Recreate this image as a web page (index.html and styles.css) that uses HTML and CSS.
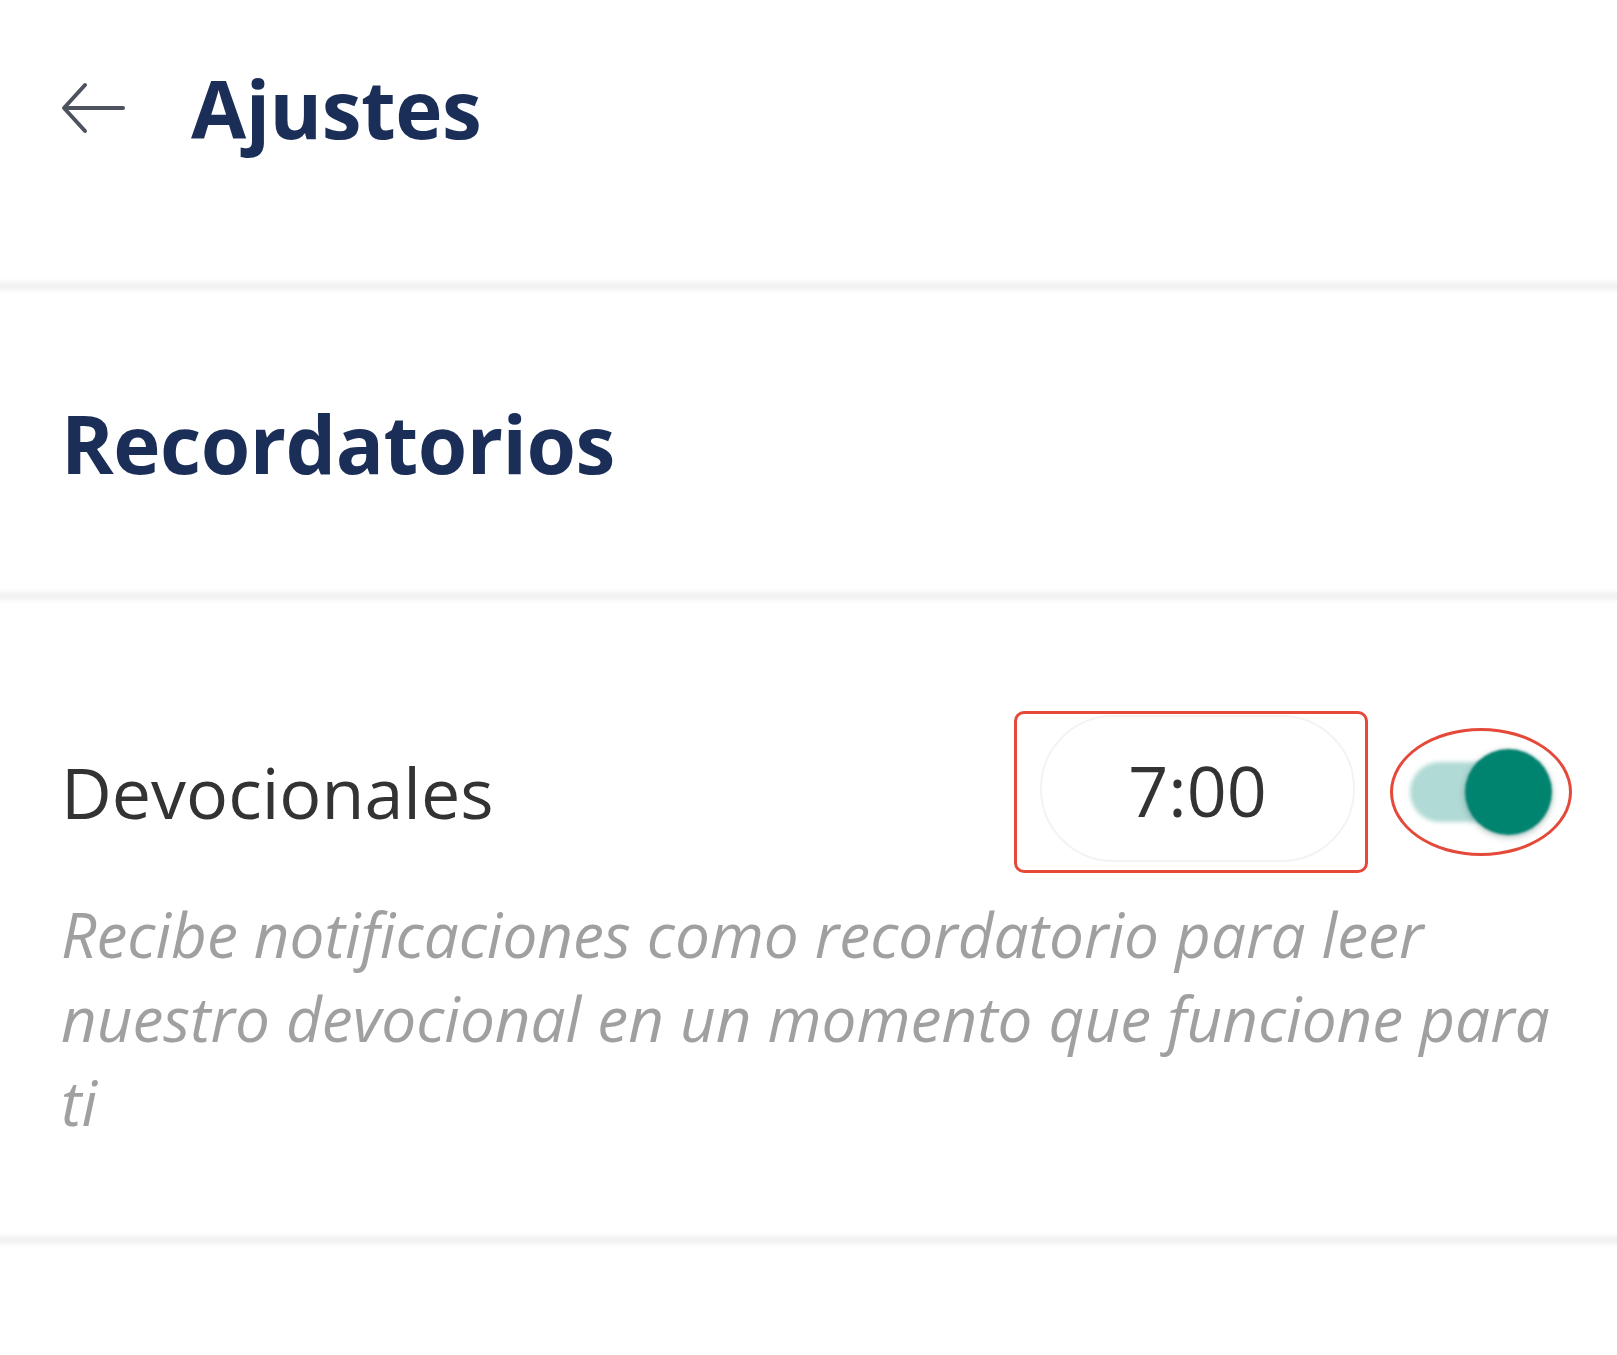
FILE: index.html
```html
<!DOCTYPE html>
<html lang="es">
<head>
<meta charset="utf-8">
<title>Ajustes</title>
<link rel="stylesheet" href="styles.css">
</head>
<body>
<div class="page">
  <header class="header">
    <svg class="back" width="64" height="52" viewBox="0 0 64 52" aria-hidden="true">
      <path d="M62 26 H4 M24 3 L3 26 L24 49" fill="none" stroke="#4c525e" stroke-width="4" stroke-linecap="round" stroke-linejoin="round"/>
    </svg>
    <h1 class="title">Ajustes</h1>
  </header>
  <div class="divider"></div>
  <section class="section-head">
    <h2 class="section-title">Recordatorios</h2>
  </section>
  <div class="divider"></div>
  <section class="setting">
    <div class="setting-top">
      <span class="setting-label">Devocionales</span>
      <div class="controls">
        <div class="highlight-rect">
          <div class="time-pill">7:00</div>
        </div>
        <div class="highlight-ring">
          <div class="switch">
            <div class="track"></div>
            <div class="thumb"></div>
          </div>
        </div>
      </div>
    </div>
    <p class="setting-desc">Recibe notificaciones como recordatorio para leer nuestro devocional en un momento que funcione para ti</p>
  </section>
  <div class="divider"></div>
</div>
</body>
</html>
```

FILE: styles.css
```css
html, body {
  margin: 0;
  padding: 0;
  background: #ffffff;
}

body {
  font-family: "Open Sans", "Noto Sans", sans-serif;
  width: 1617px;
  height: 1355px;
  overflow: hidden;
}

.page {
  display: flex;
  flex-direction: column;
}

.header {
  display: flex;
  align-items: center;
  height: 80px;
  padding: 68px 0 134px 61px;
}

.back {
  display: block;
  flex: none;
}

.title {
  margin: 0 0 0 66px;
  font-size: 80px;
  line-height: 80px;
  font-weight: 700;
  color: #1b2e58;
  letter-spacing: -0.5px;
}

.divider {
  height: 8px;
  background: #f1f1f1;
  filter: blur(2px);
  margin: 0 -4px;
}

.section-head {
  padding: 113px 0 109px 61px;
}

.section-title {
  margin: 0;
  font-size: 80px;
  line-height: 80px;
  font-weight: 700;
  color: #1b2e58;
  letter-spacing: -0.5px;
}

.setting {
  padding: 111px 45px 92px 61px;
}

.setting-top {
  display: flex;
  align-items: center;
  justify-content: space-between;
}

.setting-label {
  font-size: 70px;
  color: #333333;
}

.controls {
  display: flex;
  align-items: center;
  gap: 22px;
}

.highlight-rect {
  border: 3px solid #e4493a;
  border-radius: 10px;
  padding: 1px 10px 8px 23px;
}

.time-pill {
  width: 315px;
  height: 147px;
  border: 2px solid #f3f3f3;
  border-radius: 74px;
  display: flex;
  align-items: center;
  justify-content: center;
  font-size: 70px;
  color: #333333;
  padding-top: 2px;
  box-sizing: border-box;
}

.highlight-ring {
  width: 176px;
  height: 122px;
  border: 3px solid #e4493a;
  border-radius: 50%;
  display: flex;
  align-items: center;
  justify-content: center;
}

.switch {
  position: relative;
  width: 142px;
  height: 86px;
}

.track {
  position: absolute;
  left: 0;
  top: 13px;
  width: 116px;
  height: 60px;
  border-radius: 30px;
  background: #b0dad5;
  filter: blur(2px);
}

.thumb {
  position: absolute;
  right: 0;
  top: 0;
  width: 87px;
  height: 86px;
  border-radius: 50%;
  background: #00836f;
  box-shadow: 0 2px 6px rgba(0, 60, 50, 0.35);
  filter: blur(1px);
}

.setting-desc {
  margin: 19px 0 0 0;
  font-size: 62px;
  line-height: 84px;
  font-style: italic;
  color: #a0a0a0;
}
```
